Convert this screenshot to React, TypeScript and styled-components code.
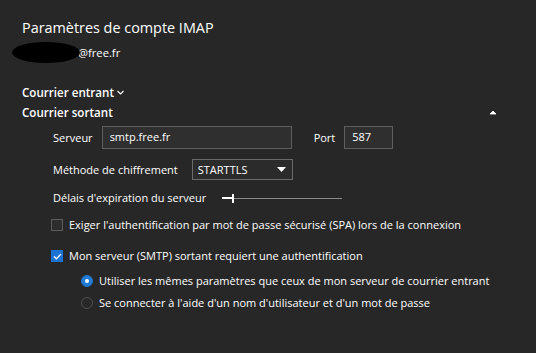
import React from 'react';
import styled, { createGlobalStyle } from 'styled-components';

const GlobalStyle = createGlobalStyle`
  html, body {
    margin: 0;
    padding: 0;
    background: #272727;
  }
  body {
    font-family: "Open Sans", "Noto Sans", sans-serif;
    color: #ffffff;
    font-size: 11px;
    line-height: 18px;
  }
`;

const Page = styled.div`
  width: 536px;
  height: 353px;
  box-sizing: border-box;
  padding: 17px 22px 0;
  display: flex;
  flex-direction: column;
`;

const Title = styled.h1`
  margin: 0;
  font-size: 14.4px;
  font-weight: 400;
  line-height: 21px;
`;

const AccountRow = styled.div`
  position: relative;
  margin-top: 4px;
  padding-left: 56px;
  height: 18px;
  line-height: 22px;
  font-size: 11.2px;
`;

const Blob = styled.span`
  position: absolute;
  left: -10px;
  top: 0;
  width: 68px;
  height: 21px;
  border-radius: 50%;
  background: #000;
`;

const SectionHeader = styled.div<{ $top: number }>`
  display: flex;
  align-items: center;
  margin-top: ${p => p.$top}px;
  height: 19px;
  font-weight: 600;
  font-size: 11.6px;
`;

const Grow = styled.div`
  flex: 1;
`;

const Form = styled.div`
  display: flex;
  flex-direction: column;
  padding-left: 31px;
  margin-top: 4px;
`;

const Row = styled.div<{ $top?: number; $indent?: number }>`
  display: flex;
  align-items: center;
  margin-top: ${p => p.$top ?? 0}px;
  margin-left: ${p => p.$indent ?? 0}px;
  min-height: 18px;
  white-space: nowrap;
`;

const Label = styled.span<{ $gap?: number }>`
  margin-right: ${p => p.$gap ?? 9}px;
`;

const PortLabel = styled(Label)`
  margin-left: 22px;
`;

const TextBox = styled.div<{ $width: number }>`
  width: ${p => p.$width}px;
  height: 23px;
  box-sizing: border-box;
  border: 1px solid #5e5e5e;
  background: #2f2f2f;
  padding: 0 7px;
  line-height: 19px;
`;

const Select = styled.div`
  width: 101px;
  height: 21px;
  box-sizing: border-box;
  border: 1px solid #6a6a6a;
  background: #2b2b2b;
  padding: 0 6px 0 5px;
  display: flex;
  align-items: center;
  justify-content: space-between;
  line-height: 18px;
`;

const Slider = styled.div`
  display: flex;
  align-items: center;
  margin-left: 16px;
  width: 120px;
  height: 10px;
`;

const SliderFill = styled.div`
  width: 10px;
  height: 2px;
  background: #ffffff;
`;

const SliderThumb = styled.div`
  width: 2px;
  height: 9px;
  background: #ffffff;
`;

const SliderTrack = styled.div`
  flex: 1;
  height: 1px;
  background: #8a8a8a;
`;

const Box = styled.span<{ $checked?: boolean }>`
  width: 12px;
  height: 12px;
  box-sizing: border-box;
  margin: 0 6px 0 -2px;
  border: 1px solid ${p => (p.$checked ? '#1b74d4' : '#5c5c5c')};
  background: ${p => (p.$checked ? '#1b74d4' : '#2d2d2d')};
  display: flex;
  align-items: center;
  justify-content: center;
`;

const Radio = styled.span<{ $checked?: boolean }>`
  width: 12px;
  height: 12px;
  box-sizing: border-box;
  border-radius: 50%;
  margin-right: 6px;
  display: flex;
  align-items: center;
  justify-content: center;
  background: ${p => (p.$checked ? '#2079d3' : 'transparent')};
  border: 1px solid ${p => (p.$checked ? '#2079d3' : '#4e4e4e')};

  &::after {
    content: '';
    display: ${p => (p.$checked ? 'block' : 'none')};
    width: 4px;
    height: 4px;
    border-radius: 50%;
    background: #ffffff;
  }
`;

const ChevronDown = () => (
  <svg width="7" height="5" viewBox="0 0 7 5" style={{ marginLeft: 3 }}>
    <path d="M0.5 1 L3.5 4 L6.5 1" fill="none" stroke="#fff" strokeWidth="1.1" />
  </svg>
);

const CaretUp = () => (
  <svg width="8" height="5" viewBox="0 0 8 5" style={{ marginRight: 17 }}>
    <path d="M1 4 L4 1 L7 4 Z" fill="#fff" stroke="#fff" strokeWidth="0.8" strokeLinejoin="round" />
  </svg>
);

const SelectArrow = () => (
  <svg width="9" height="5" viewBox="0 0 9 5">
    <path d="M0 0 H9 L4.5 5 Z" fill="#fff" />
  </svg>
);

const Check = () => (
  <svg width="9" height="7" viewBox="0 0 9 7">
    <path d="M1 3.5 L3.4 5.8 L8 1" fill="none" stroke="#fff" strokeWidth="1.3" />
  </svg>
);

function App() {
  return (
    <Page>
      <GlobalStyle />
      <Title>Paramètres de compte IMAP</Title>
      <AccountRow>
        <Blob />
        @free.fr
      </AccountRow>

      <SectionHeader $top={23}>
        Courrier entrant
        <ChevronDown />
      </SectionHeader>
      <SectionHeader $top={1}>
        Courrier sortant
        <Grow />
        <CaretUp />
      </SectionHeader>

      <Form>
        <Row>
          <Label>Serveur</Label>
          <TextBox $width={190}>smtp.free.fr</TextBox>
          <PortLabel>Port</PortLabel>
          <TextBox $width={49}>587</TextBox>
        </Row>
        <Row $top={10}>
          <Label $gap={14}>Méthode de chiffrement</Label>
          <Select>
            STARTTLS
            <SelectArrow />
          </Select>
        </Row>
        <Row $top={9}>
          <Label $gap={0}>Délais d'expiration du serveur</Label>
          <Slider>
            <SliderFill />
            <SliderThumb />
            <SliderTrack />
          </Slider>
        </Row>
        <Row $top={9}>
          <Box />
          Exiger l'authentification par mot de passe sécurisé (SPA) lors de la connexion
        </Row>
        <Row $top={13}>
          <Box $checked>
            <Check />
          </Box>
          Mon serveur (SMTP) sortant requiert une authentification
        </Row>
        <Row $top={7} $indent={28}>
          <Radio $checked />
          Utiliser les mêmes paramètres que ceux de mon serveur de courrier entrant
        </Row>
        <Row $top={4} $indent={28}>
          <Radio />
          Se connecter à l'aide d'un nom d'utilisateur et d'un mot de passe
        </Row>
      </Form>
    </Page>
  );
}

export default App;
